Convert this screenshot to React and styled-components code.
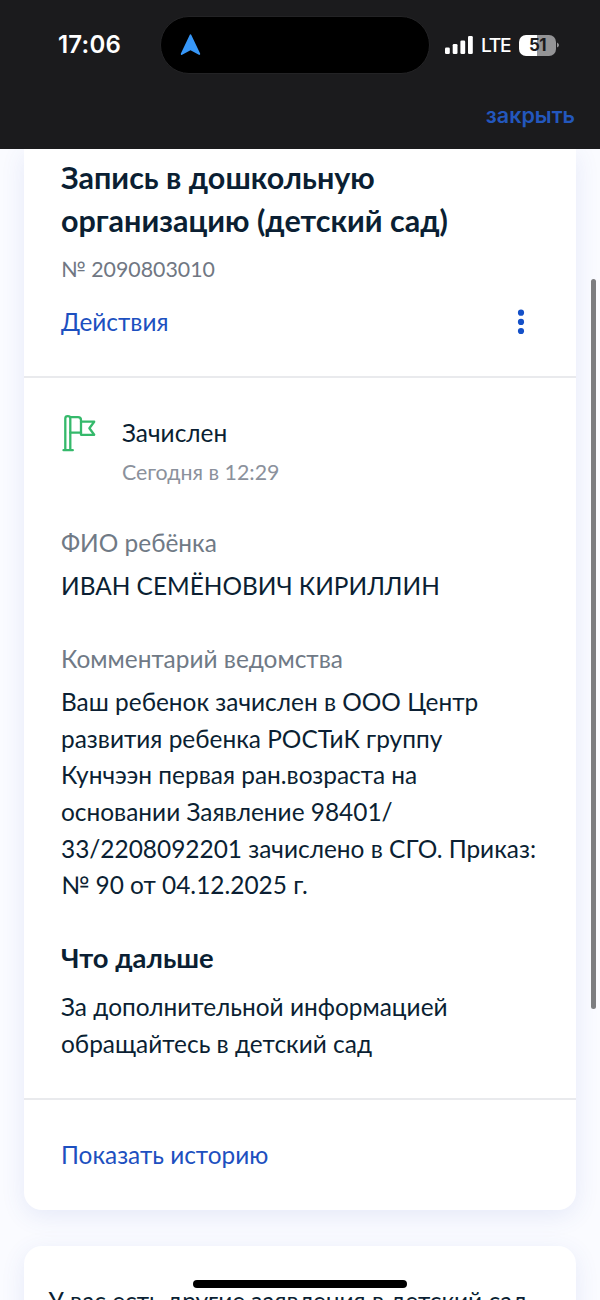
import React from "react";
import styled, { createGlobalStyle } from "styled-components";

const Global = createGlobalStyle`
  *{box-sizing:border-box;}
  html,body{margin:0;padding:0;overflow:hidden;background:#fafbff;}
`;
const Screen = styled.div`
  position: relative;
  width: 600px;
  height: 1300px;
  overflow: hidden;
  display: flex;
  flex-direction: column;
  background: #fafbff;
  color: #0b1f33;
  font-family: Lato, sans-serif;
`;
const TopBar = styled.header`
  flex: none;
  height: 149px;
  background: #1b1b1d;
  position: relative;
  z-index: 1;
`;
const StatusRow = styled.div`
  display: flex;
  align-items: center;
  padding: 16px 41px 0 58px;
  height: 74px;
  font-family: Inter, sans-serif;
  color: #fff;
`;
const Clock = styled.span`
  width: 102px;
  font-size: 24px;
  font-weight: 600;
  letter-spacing: 0.2px;
  line-height: 30px;
`;
const Island = styled.div`
  width: 270px;
  height: 58px;
  border-radius: 29px;
  background: #000;
  border: 1px solid #232325;
  display: flex;
  align-items: center;
  padding-left: 19px;
  margin-right: 15px;
`;
const Lte = styled.span`
  font-size: 19.2px;
  font-weight: 500;
  line-height: 24px;
  width: 30px;
  margin: 0 8px;
  letter-spacing: -1.3px;
`;
const Battery = styled.span`
  width: 37px;
  height: 21px;
  border-radius: 7px;
  background: linear-gradient(90deg, #fff 50%, #949496 50%);
  color: #1b1b1d;
  font-size: 17px;
  font-weight: 700;
  line-height: 21px;
  text-align: center;
  letter-spacing: -0.6px;
`;
const CloseRow = styled.div`
  display: flex;
  justify-content: flex-end;
  padding: 26px 25px 0 0;
`;
const Close = styled.button`
  border: 0;
  padding: 0;
  background: none;
  color: #2357bd;
  font: 600 21.5px/30px Inter, sans-serif;
  letter-spacing: 0;
`;
const Card = styled.article`
  flex: none;
  margin: 0 24px 36px;
  background: #fff;
  border-radius: ${(p) => (p.$cut ? "0 0 18px 18px" : "18px")};
  box-shadow: 0 6px 24px rgba(60, 90, 190, 0.11);
`;
const Section = styled.section`
  padding: ${(p) => p.$pad};
  height: ${(p) => p.$h}px;
  & + & {
    border-top: 2px solid #e9eaed;
  }
`;
const Title = styled.h1`
  margin: 0;
  font-size: 30.5px;
  line-height: 42.7px;
  font-weight: 700;
`;
const Subtitle = styled.h2`
  margin: 36px 0 12.4px;
  font-size: 27.4px;
  line-height: 36.6px;
  font-weight: 700;
`;
const Text = styled.p`
  margin: ${(p) => p.$mt || 0}px 0 0;
  font-size: 24.43px;
  line-height: 36.65px;
  white-space: nowrap;
  color: ${(p) => (p.$muted ? "#707a86" : "inherit")};
`;
const Small = styled.p`
  margin: ${(p) => p.$mt}px 0 0;
  font-size: 21.35px;
  line-height: 30.5px;
  color: ${(p) => p.$color};
`;
const Actions = styled.div`
  display: flex;
  justify-content: space-between;
  align-items: center;
  margin-top: 19px;
`;
const Link = styled.a`
  font-size: 24.4px;
  line-height: 36.65px;
  color: #1d50c0;
`;
const Status = styled.div`
  display: grid;
  grid-template-columns: 61px 1fr;
`;
const DotsButton = styled.button`
  display: flex;
  border: 0;
  padding: 0;
  margin: 0 14.5px 1px 0;
  background: none;
`;
const Scrollbar = styled.div`
  position: absolute;
  right: 4px;
  top: 279px;
  width: 5px;
  height: 730px;
  border-radius: 3px;
  background: #7c7d80;
`;
const HomeBar = styled.div`
  position: absolute;
  left: 193px;
  bottom: 12px;
  width: 214px;
  height: 8px;
  border-radius: 4px;
  background: #000;
`;

const comment = [
  "Ваш ребенок зачислен в ООО Центр",
  "развития ребенка РОСТиК группу",
  "Кунчээн первая ран.возраста на",
  "основании Заявление 98401/",
  "33/2208092201 зачислено в СГО. Приказ:",
  "№ 90 от 04.12.2025 г.",
];

const Lines = ({ items }) =>
  items.map((line, i) => (
    <React.Fragment key={line}>
      {i > 0 && <br />}
      {line}
    </React.Fragment>
  ));

const LocationArrow = () => (
  <svg width="21" height="22" viewBox="0 0 21 22">
    <path d="M10.5 1.3 19.3 20 10.5 15.2 1.7 20Z" fill="#3797f8" stroke="#3797f8" strokeWidth="1.8" strokeLinejoin="round" />
  </svg>
);
const Signal = () => (
  <svg width="28" height="18" viewBox="0 0 28 18" fill="#fff">
    <rect x="0" y="11.5" width="4.8" height="6.5" rx="1.3" />
    <rect x="7.7" y="8" width="4.8" height="10" rx="1.3" />
    <rect x="15.4" y="4.5" width="4.8" height="13.5" rx="1.3" />
    <rect x="23" y="0" width="4.8" height="18" rx="1.3" />
  </svg>
);
const BatteryTip = () => (
  <svg width="3" height="6" viewBox="0 0 3 6">
    <path d="M1 0.5Q3 1.5 3 3T1 5.5Z" fill="#949496" />
  </svg>
);
const Dots = () => (
  <svg width="8" height="26" viewBox="0 0 8 26" fill="#1450c8">
    <circle cx="4" cy="3.7" r="3.1" />
    <circle cx="4" cy="12.9" r="3.1" />
    <circle cx="4" cy="22" r="3.1" />
  </svg>
);
const Flag = () => (
  <svg width="36" height="38" viewBox="0 0 36 38" fill="none" stroke="#35b96b" strokeWidth="2.3" strokeLinecap="round" strokeLinejoin="round">
    <path d="M2.5 35.2H11.8M4.3 35.2V3.5Q4.3 1.2 6.8 1.2T9.3 3.5V35.2" />
    <path d="M9.3 2.2H17Q20 2.2 20 5.2V17.7H9.3" />
    <path d="M20 6.7H33.2L28.4 13.2 33.2 19.8H20V17.7" />
  </svg>
);

export default function App() {
  return (
    <Screen>
      <Global />
      <TopBar>
        <StatusRow>
          <Clock>17:06</Clock>
          <Island><LocationArrow /></Island>
          <Signal />
          <Lte>LTE</Lte>
          <Battery>51</Battery>
          <BatteryTip />
        </StatusRow>
        <CloseRow><Close>закрыть</Close></CloseRow>
      </TopBar>
      <Card $cut>
        <Section $pad="7px 37px 0" $h={227}>
          <Title><Lines items={["Запись в дошкольную", "организацию (детский сад)"]} /></Title>
          <Small $mt={13} $color="#707783">№ 2090803010</Small>
          <Actions>
            <Link>Действия</Link>
            <DotsButton aria-label="Меню"><Dots /></DotsButton>
          </Actions>
        </Section>
        <Section $pad="37px 37px 0" $h={722}>
          <Status>
            <Flag />
            <div>
              <Text>Зачислен</Text>
              <Small $mt={5} $color="#8b919c">Сегодня в 12:29</Small>
            </div>
          </Status>
          <Text $mt={38} $muted>ФИО ребёнка</Text>
          <Text $mt={6}>ИВАН СЕМЁНОВИЧ КИРИЛЛИН</Text>
          <Text $mt={37} $muted>Комментарий ведомства</Text>
          <Text $mt={6}><Lines items={comment} /></Text>
          <Subtitle>Что дальше</Subtitle>
          <Text><Lines items={["За дополнительной информацией", "обращайтесь в детский сад"]} /></Text>
        </Section>
        <Section $pad="37px 37px 0" $h={112}>
          <Link>Показать историю</Link>
        </Section>
      </Card>
      <Card>
        <Section $pad="37px 24.5px 0" $h={160}>
          <Text>У вас есть другие заявления в детский сад</Text>
        </Section>
      </Card>
      <Scrollbar />
      <HomeBar />
    </Screen>
  );
}
